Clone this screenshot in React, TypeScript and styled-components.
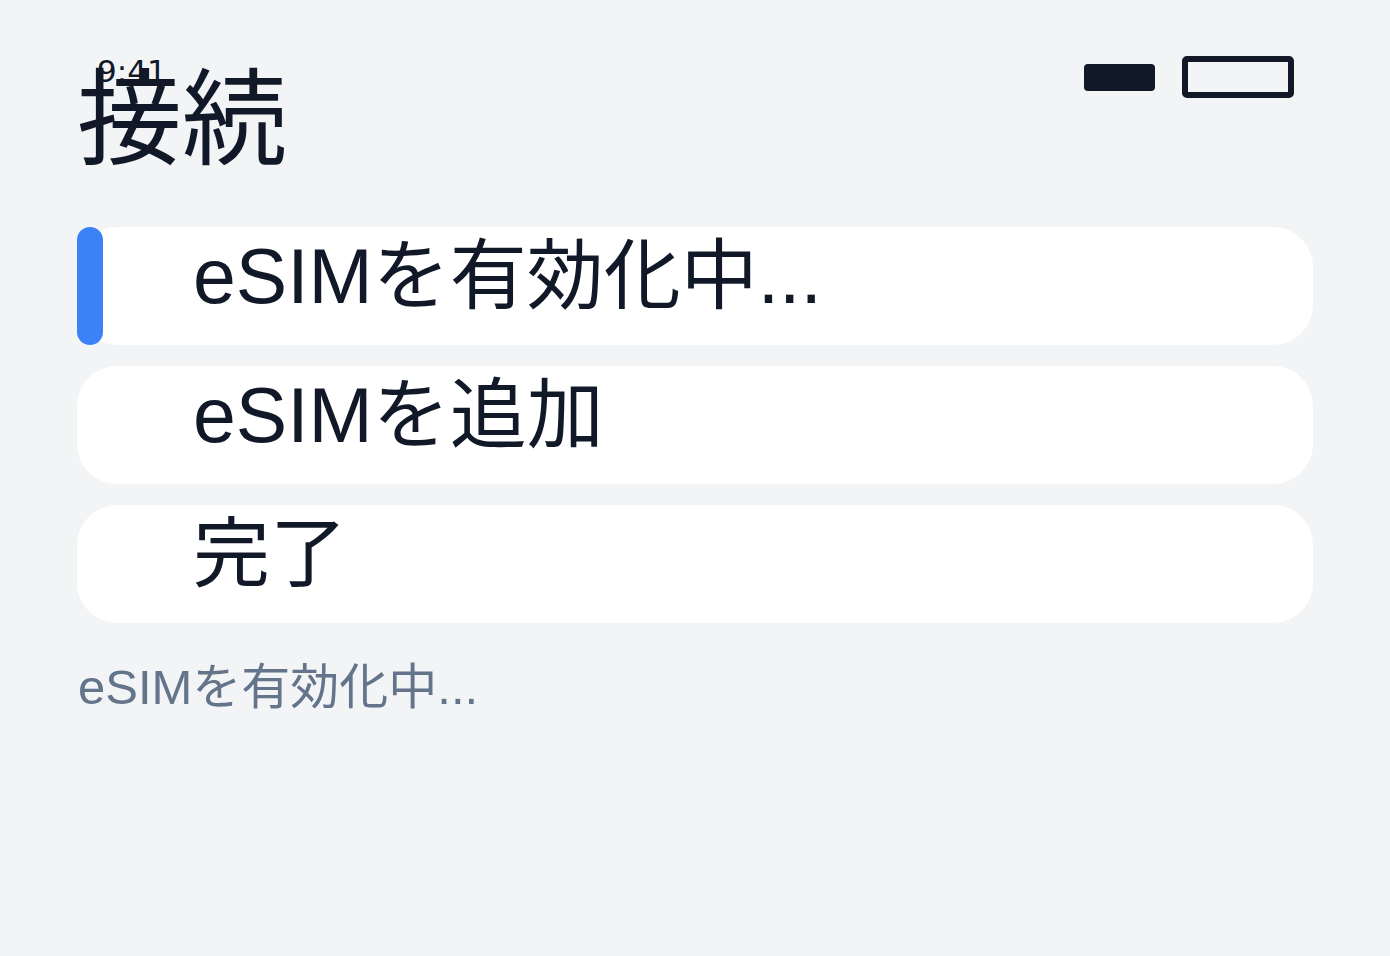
import styled, { createGlobalStyle } from "styled-components";

const GlobalStyle = createGlobalStyle`
    html, body {
        margin: 0;
        padding: 0;
        background: #f3f4f6;
    }
    body {
        font-family: "Liberation Sans", "Noto Sans CJK JP", sans-serif;
        color: #111827;
    }
`;

const steps = [
    { label: "eSIMを有効化中...", active: true },
    { label: "eSIMを追加", active: false },
    { label: "完了", active: false },
];

const Screen = styled.div`
    position: relative;
    box-sizing: border-box;
    width: 1390px;
    min-height: 956px;
    padding: 46px 77px 0 77px;
`;

const StatusBar = styled.div`
    position: absolute;
    top: 54px;
    left: 97px;
    right: 96px;
    display: flex;
    justify-content: space-between;
    align-items: flex-start;
`;

const Time = styled.span`
    font-family: "DejaVu Sans", sans-serif;
    font-size: 31px;
    line-height: 35px;
    color: #111827;
`;

const StatusIcons = styled.div`
    display: flex;
    align-items: center;
    gap: 27px;
    margin-top: 2px;
    height: 42px;
`;

const Signal = styled.div`
    width: 71px;
    height: 27px;
    border-radius: 4px;
    background: #111827;
`;

const Battery = styled.div`
    box-sizing: border-box;
    width: 112px;
    height: 42px;
    border: 6px solid #111827;
    border-radius: 5px;
`;

const Title = styled.h1`
    margin: 0;
    font-family: "Noto Sans CJK JP", sans-serif;
    font-size: 105px;
    font-weight: 400;
    line-height: 128px;
    color: #111827;
`;

const StepList = styled.div`
    display: flex;
    flex-direction: column;
    gap: 21px;
    margin-top: 53px;
`;

const StepCard = styled.div`
    position: relative;
    display: flex;
    align-items: center;
    height: 118px;
    padding-left: 116px;
    border-radius: 40px;
    background: #ffffff;
`;

const Indicator = styled.span`
    position: absolute;
    left: 0;
    top: 0;
    bottom: 0;
    width: 26px;
    border-radius: 13px;
    background: #3b82f6;
`;

const StepLabel = styled.span`
    font-size: 77px;
    line-height: 1;
    margin-top: -20px;
    color: #111827;
`;

const StatusText = styled.p`
    margin: 29px 0 0 1px;
    font-size: 49px;
    line-height: 70px;
    color: #64748b;
`;

function App() {
    return (
        <>
            <GlobalStyle />
            <Screen>
                <StatusBar>
                    <Time>9:41</Time>
                    <StatusIcons>
                        <Signal />
                        <Battery />
                    </StatusIcons>
                </StatusBar>
                <Title>接続</Title>
                <StepList>
                    {steps.map((step) => (
                        <StepCard key={step.label}>
                            {step.active && <Indicator />}
                            <StepLabel>{step.label}</StepLabel>
                        </StepCard>
                    ))}
                </StepList>
                <StatusText>eSIMを有効化中...</StatusText>
            </Screen>
        </>
    );
}

export default App;
